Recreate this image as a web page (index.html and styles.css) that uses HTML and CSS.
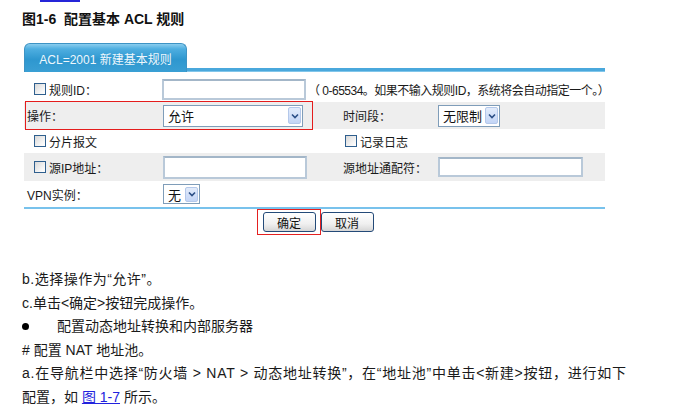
FILE: index.html
```html
<!DOCTYPE html>
<html lang="zh-CN">
<head>
<meta charset="utf-8">
<link rel="stylesheet" href="styles.css">
</head>
<body>
<div class="page">
  <div class="prev-link"></div>
  <h1 class="fig-title">图1-6&nbsp; 配置基本 ACL 规则</h1>

  <div class="panel">
    <div class="tabbar">
      <div class="tab">ACL=2001 新建基本规则</div>
      <div class="tabline"></div>
    </div>

    <div class="form">
      <div class="row row1">
        <div class="cell c1 chk-cell"><span class="checkbox"></span>规则ID：</div>
        <div class="cell c2wide">
          <span class="input w144"></span>
          <span class="hint">（ 0-65534。如果不输入规则ID，系统将会自动指定一个。）</span>
        </div>
      </div>

      <div class="row row2 grey">
        <div class="cell c1 plain">操作：</div>
        <div class="cell c2"><span class="select w140"><span class="sel-text">允许</span><span class="sel-btn"><svg viewBox="0 0 8 6" width="8" height="6"><path d="M1 1.5 L4 4.5 L7 1.5" fill="none" stroke="#2c4f86" stroke-width="1.6"/></svg></span></span></div>
        <div class="cell c3">时间段：</div>
        <div class="cell c4"><span class="select w62"><span class="sel-text">无限制</span><span class="sel-btn"><svg viewBox="0 0 8 6" width="8" height="6"><path d="M1 1.5 L4 4.5 L7 1.5" fill="none" stroke="#2c4f86" stroke-width="1.6"/></svg></span></span></div>
        <div class="annot"></div>
      </div>

      <div class="row row3">
        <div class="cell c1 chk-cell"><span class="checkbox"></span>分片报文</div>
        <div class="cell c2"></div>
        <div class="cell c3 chk3"><span class="checkbox"></span>记录日志</div>
        <div class="cell c4"></div>
      </div>

      <div class="row row4 grey">
        <div class="cell c1 chk-cell"><span class="checkbox"></span>源IP地址：</div>
        <div class="cell c2"><span class="input w144 h23"></span></div>
        <div class="cell c3">源地址通配符：</div>
        <div class="cell c4"><span class="input w145 h20"></span></div>
      </div>

      <div class="row row5">
        <div class="cell c1 plain">VPN实例：</div>
        <div class="cell c2"><span class="select w37"><span class="sel-text">无</span><span class="sel-btn"><svg viewBox="0 0 8 6" width="8" height="6"><path d="M1 1.5 L4 4.5 L7 1.5" fill="none" stroke="#2c4f86" stroke-width="1.6"/></svg></span></span></div>
        <div class="cell c3"></div>
        <div class="cell c4"></div>
      </div>
    </div>

    <div class="btnrow">
      <span class="mark"><span class="btn">确定</span></span>
      <span class="btn">取消</span>
    </div>
  </div>

  <div class="doc">
    <p class="wide">b.选择操作为“允许”。</p>
    <p>c.单击&lt;确定&gt;按钮完成操作。</p>
    <p class="bullet"><span class="dot"></span>配置动态地址转换和内部服务器</p>
    <p># 配置 NAT 地址池。</p>
    <p class="wider">a.在导航栏中选择“防火墙 &gt; NAT &gt; 动态地址转换”，在“地址池”中单击&lt;新建&gt;按钮，进行如下</p>
    <p>配置，如 <a class="ref" href="#">图 1-7</a> 所示。</p>
  </div>
</div>
</body>
</html>
```

FILE: styles.css
```css
html, body {
  margin: 0;
  padding: 0;
  background: #ffffff;
}

.page {
  padding-left: 22px;
  font-family: "Liberation Sans", "Noto Sans CJK SC", sans-serif;
  color: #000;
}

.prev-link {
  margin-left: 18px;
  width: 40px;
  height: 2px;
  background: #2525d8;
}

.fig-title {
  margin: 7px 0 0 0;
  font-size: 14px;
  line-height: 20px;
  font-weight: bold;
  color: #111;
}

.panel {
  margin-top: 14px;
  margin-left: 2px;
  width: 581px;
  font-size: 12px;
  color: #1a1a1a;
}

.tabbar {
  display: flex;
  align-items: flex-end;
  height: 29px;
}

.tab {
  width: 161px;
  height: 28px;
  border: 1px solid #3d93c4;
  border-bottom: none;
  border-radius: 6px 6px 0 0;
  background: linear-gradient(#8acdee 0%, #4eaee0 18%, #2e97cf 55%, #3a9fd4 100%);
  color: #eef7fc;
  display: flex;
  align-items: center;
  justify-content: center;
  font-size: 12px;
}

.tabline {
  flex: 1;
  height: 4px;
  background: linear-gradient(#4aa8dc 0%, #4aa8dc 70%, #a9dbf4 100%);
}

.form {
  display: flex;
  flex-direction: column;
}

.row {
  position: relative;
  display: grid;
  grid-template-columns: 138px 178px 97px 168px;
  align-items: center;
}

.grey {
  background: #eeeeee;
}

.row1 { height: 26px; padding-top: 4px; }
.row2 { height: 27px; }
.row3 { height: 24px; }
.row4 { height: 28px; }
.row5 { height: 26px; }

.cell {
  display: flex;
  align-items: center;
  white-space: nowrap;
}

.c1.plain { padding-left: 3px; }
.chk-cell { padding-left: 10px; }
.c2 { padding-left: 1px; }
.c3 { padding-left: 3px; }
.c3.chk3 { padding-left: 5px; }
.c4 { padding-left: 1px; }

.c2wide {
  grid-column: 2 / span 3;
  display: flex;
  align-items: center;
  overflow: visible;
}

.checkbox {
  display: inline-block;
  flex-shrink: 0;
  width: 10px;
  height: 10px;
  border: 1px solid #2f5f8e;
  background: linear-gradient(135deg, #d8d8d8, #f6f6f6 70%, #ffffff);
  margin-right: 3px;
}

.input {
  display: inline-block;
  flex-shrink: 0;
  box-sizing: border-box;
  height: 21px;
  background: #fff;
  border: 2px solid #b9c9d9;
  border-top-color: #a3b6c8;
}
.w144 { width: 144px; }
.w145 { width: 145px; }
.h23 { height: 23px; }
.h20 { height: 20px; }

.hint {
  flex-shrink: 0;
  margin-left: 2px;
  font-size: 12px;
  letter-spacing: -0.5px;
}

.select {
  display: inline-flex;
  flex-shrink: 0;
  align-items: center;
  justify-content: space-between;
  box-sizing: border-box;
  height: 22px;
  background: #fff;
  border: 1px solid #7f9db9;
  padding: 1px 1px 1px 4px;
  font-size: 13px;
}
.w140 { width: 140px; }
.w62 { width: 62px; }
.w37 { width: 37px; height: 20px; }

.sel-text {
  color: #111;
}

.sel-btn {
  width: 13px;
  height: 17px;
  box-sizing: border-box;
  border: 1px solid #b4c8ea;
  border-radius: 2px;
  background: linear-gradient(#e3ecfb, #c3d5f6);
  display: flex;
  align-items: center;
  justify-content: center;
}
.w37 .sel-btn { height: 15px; }

.annot {
  position: absolute;
  left: 1px;
  top: -1px;
  width: 286px;
  height: 27px;
  border: 1px solid #e41c1c;
  pointer-events: none;
}

.btnrow {
  border-top: 2px solid #78c2ec;
  display: flex;
  justify-content: center;
  padding-left: 1px;
}

.mark {
  display: inline-flex;
  border: 1px solid #e42020;
  padding: 2px 4px 2px 5px;
}

.btn {
  display: inline-flex;
  align-items: center;
  justify-content: center;
  box-sizing: border-box;
  width: 53px;
  height: 20px;
  margin-top: 3px;
  border: 1px solid #244a78;
  border-radius: 3px;
  background: linear-gradient(#ffffff, #f0f0f0 60%, #d6d6d6);
  font-size: 12px;
  color: #111;
}
.mark .btn { margin-top: 0; }

.doc {
  margin-top: 33px;
  font-size: 14px;
  line-height: 23.5px;
  color: #1a1a1a;
}

.doc p {
  margin: 0;
  white-space: nowrap;
}

.doc .wide {
  letter-spacing: 0.5px;
}

.doc .wider {
  letter-spacing: 0.75px;
}

.bullet {
  display: flex;
  align-items: center;
}

.dot {
  display: inline-block;
  width: 7px;
  height: 7px;
  border-radius: 50%;
  background: #000;
  margin-right: 28px;
}

.ref {
  color: #2222dd;
  text-decoration: underline;
}
```
